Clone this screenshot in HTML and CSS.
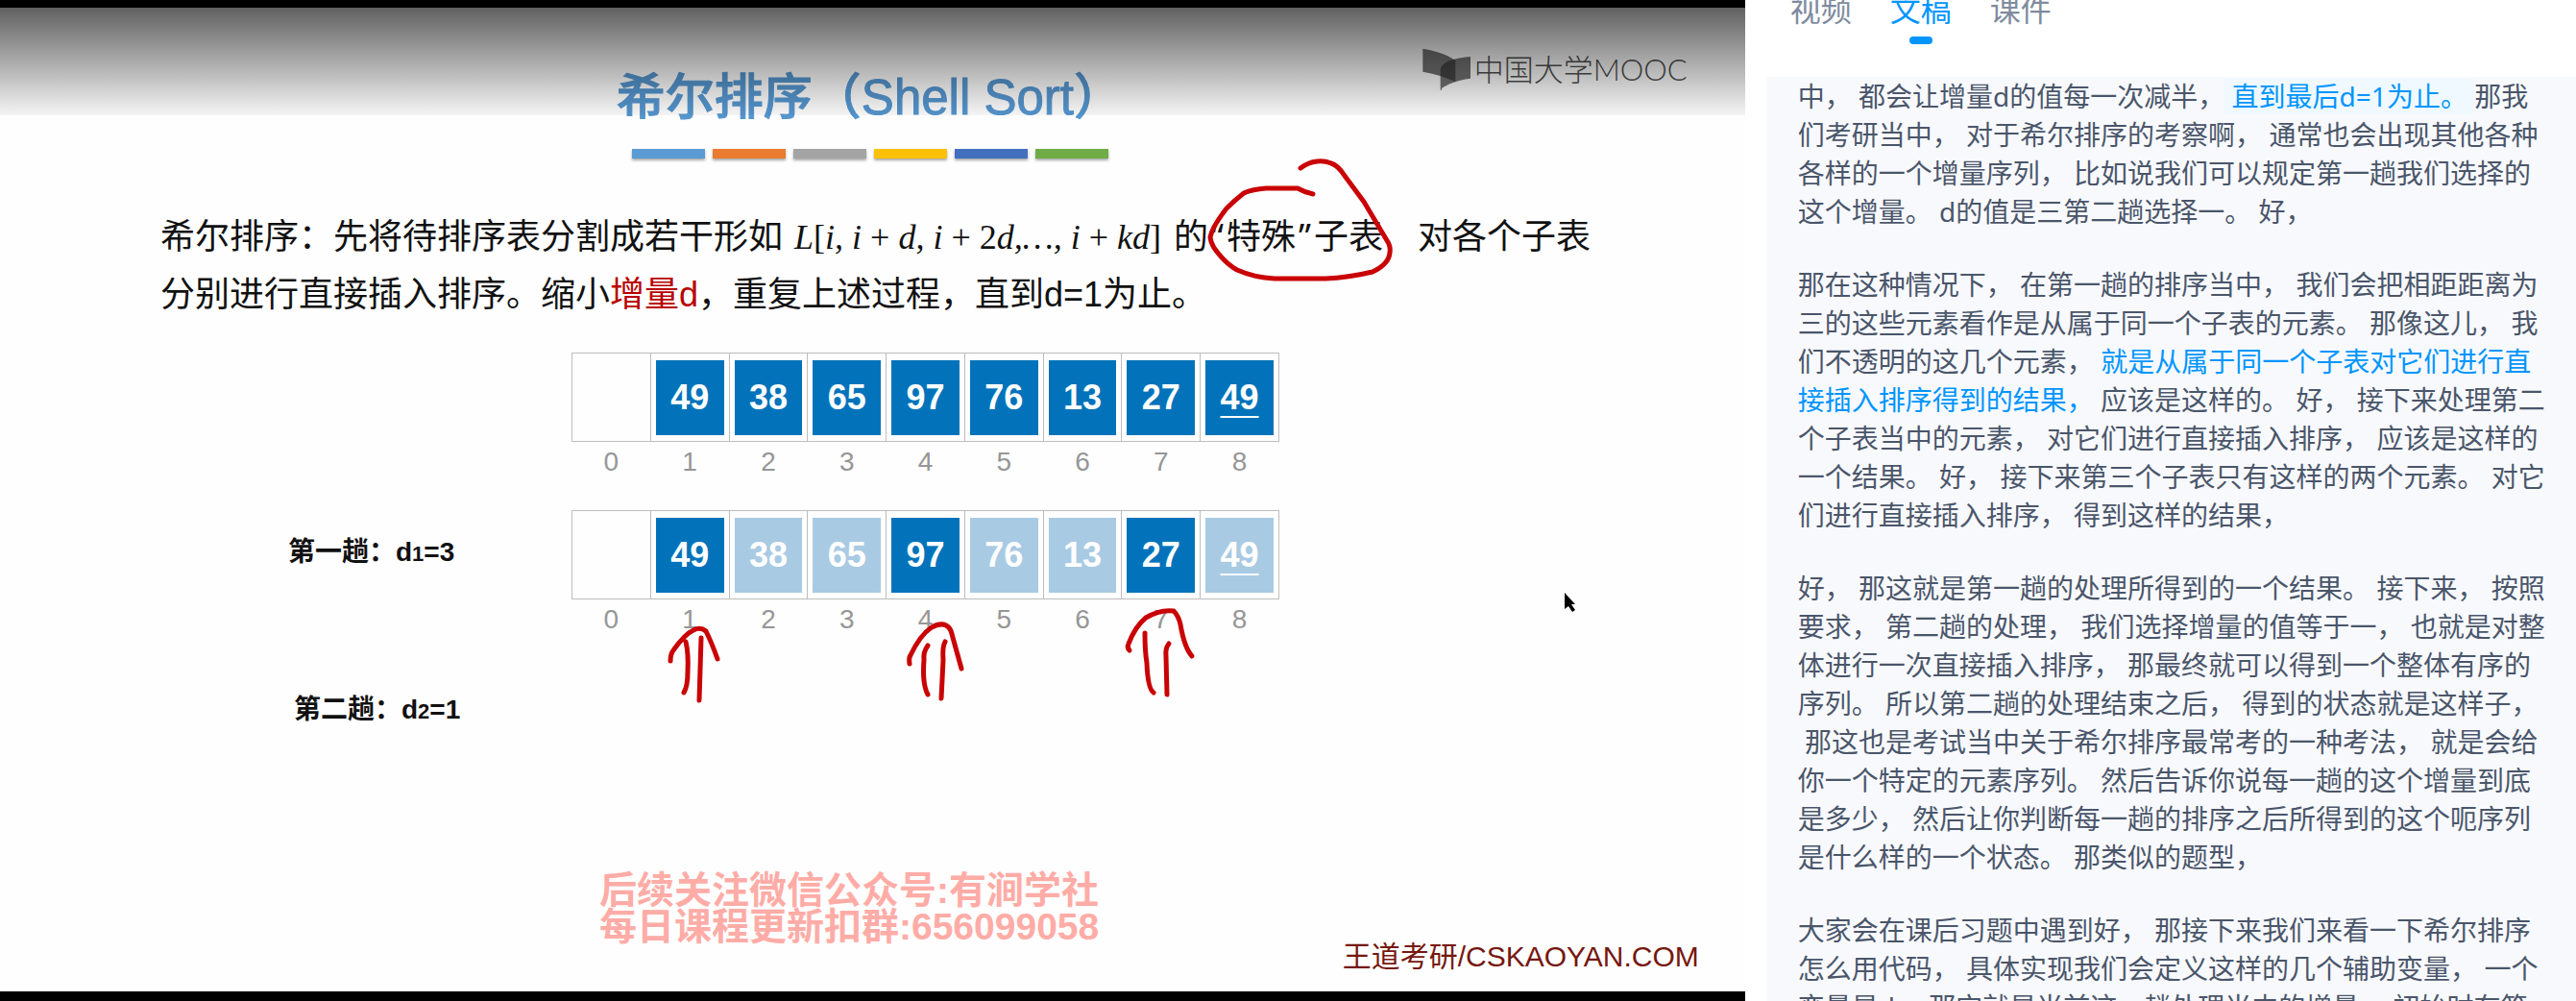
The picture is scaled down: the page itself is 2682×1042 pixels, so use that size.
FILE: index.html
```html
<!DOCTYPE html>
<html lang="zh-CN">
<head>
<meta charset="utf-8">
<title>希尔排序</title>
<link rel="stylesheet" href="styles.css">
</head>
<body>
<div class="layout">
  <main class="player">
    <article class="slide">
      <h1 class="title">希尔排序（Shell Sort）</h1>
      <div class="bars">
        <span class="bar sky"></span><span class="bar orange"></span><span class="bar gray"></span><span class="bar yellow"></span><span class="bar blue"></span><span class="bar green"></span>
      </div>
      <p class="definition">希尔排序：先将待排序表分割成若干形如<span class="math">L<b>[</b>i, i <b>+</b> d, i <b>+</b> <b>2</b>d,…, i <b>+</b> kd<b>]</b></span>的<span class="quote">“</span>特殊<span class="quote">”</span>子表　对各个子表<br>分别进行直接插入排序。缩小<em>增量d</em>，重复上述过程，直到d=1为止。</p>

      <section class="steps">
        <div class="step">
          <span class="step-name"></span>
          <table class="array">
            <tr><td></td><td><span>49</span></td><td><span>38</span></td><td><span>65</span></td><td><span>97</span></td><td><span>76</span></td><td><span>13</span></td><td><span>27</span></td><td><span><u>49</u></span></td></tr>
            <tr><th>0</th><th>1</th><th>2</th><th>3</th><th>4</th><th>5</th><th>6</th><th>7</th><th>8</th></tr>
          </table>
        </div>
        <div class="step">
          <span class="step-name">第一趟：d<small>1</small>=3</span>
          <table class="array">
            <tr><td></td><td><span>49</span></td><td class="faded"><span>38</span></td><td class="faded"><span>65</span></td><td><span>97</span></td><td class="faded"><span>76</span></td><td class="faded"><span>13</span></td><td><span>27</span></td><td class="faded"><span><u>49</u></span></td></tr>
            <tr><th>0</th><th>1</th><th>2</th><th>3</th><th>4</th><th>5</th><th>6</th><th>7</th><th>8</th></tr>
          </table>
        </div>
        <div class="step">
          <span class="step-name indented">第二趟：d<small>2</small>=1</span>
        </div>
      </section>

      <footer class="slide-footer">
        <p class="watermark">后续关注微信公众号:有涧学社<br>每日课程更新扣群:656099058</p>
        <p class="credit">王道考研/CSKAOYAN.COM</p>
      </footer>
    </article>

    <div class="brand">
      <svg width="50" height="44" viewBox="0 0 150 132" aria-hidden="true">
        <path d="M1 2C38 8 72 18 103 38V106C70 90 36 80 1 74Z" fill="#3c3c3c" fill-opacity=".72"/>
        <path d="M56 68C60 42 96 32 150 27V95C112 100 78 112 60 126V131H56Z" fill="#303030" fill-opacity=".68"/>
      </svg>
      <span>中国大学MOOC</span>
    </div>

    <div class="shade"></div>

    <svg class="ink" aria-hidden="true">
      <g fill="none" stroke="#c90305" stroke-width="5" stroke-linecap="round" stroke-linejoin="round">
        <path d="M1367 202Q1358 200 1351 196H1318Q1304 197 1295 201Q1286 208 1277 217Q1262 236 1260 247Q1261 255 1267 262Q1277 275 1288 281Q1306 289 1327 290H1380Q1404 289 1429 283Q1446 275 1447 263Q1448 257 1445 252L1420 210L1400 183Q1393 172 1386 170Q1379 167 1371 168Q1362 169 1354 175"/>
        <path d="M698 688Q698 681 701 677Q713 660 722 656Q729 652 735 657Q741 669 747 686M714 668Q717 680 716 700Q716 714 712 721M730 664L728 729"/>
        <path d="M947 691Q946 685 948 682Q958 661 970 653Q979 648 985 651Q990 654 991 660L1001 696M966 672Q961 679 962 687Q960 712 966 723M984 668Q981 673 982 687L980 727"/>
        <path d="M1176 677Q1173 674 1175 670Q1182 652 1193 643Q1208 634 1222 636Q1227 641 1229 650Q1233 674 1241 683M1192 659Q1192 678 1194 690Q1195 717 1201 721M1217 670Q1213 675 1214 683L1215 723"/>
      </g>
      <path d="M1629 617V634L1633 631L1637 637L1640 635L1636 629H1640Z" fill="#000"/>
    </svg>
  </main>

  <aside class="panel">
    <nav class="tabs">
      <button type="button" class="tab">视频</button>
      <button type="button" class="tab active">文稿</button>
      <button type="button" class="tab">课件</button>
    </nav>
    <div class="transcript">
      <p>中， 都会让增量d的值每一次减半，<mark> 直到最后d=1为止。 </mark>那我<br>们考研当中， 对于希尔排序的考察啊， 通常也会出现其他各种<br>各样的一个增量序列， 比如说我们可以规定第一趟我们选择的<br>这个增量。 d的值是三第二趟选择一。 好，</p>
      <p>那在这种情况下， 在第一趟的排序当中， 我们会把相距距离为<br>三的这些元素看作是从属于同一个子表的元素。 那像这儿， 我<br>们不透明的这几个元素， <a href="#">就是从属于同一个子表对它们进行直<br>接插入排序得到的结果，</a> 应该是这样的。 好， 接下来处理第二<br>个子表当中的元素， 对它们进行直接插入排序， 应该是这样的<br>一个结果。 好， 接下来第三个子表只有这样的两个元素。 对它<br>们进行直接插入排序， 得到这样的结果，</p>
      <p>好， 那这就是第一趟的处理所得到的一个结果。 接下来， 按照<br>要求， 第二趟的处理， 我们选择增量的值等于一， 也就是对整<br>体进行一次直接插入排序， 那最终就可以得到一个整体有序的<br>序列。 所以第二趟的处理结束之后， 得到的状态就是这样子，<br>&nbsp;那这也是考试当中关于希尔排序最常考的一种考法， 就是会给<br>你一个特定的元素序列。 然后告诉你说每一趟的这个增量到底<br>是多少， 然后让你判断每一趟的排序之后所得到的这个呃序列<br>是什么样的一个状态。 那类似的题型，</p>
      <p>大家会在课后习题中遇到好， 那接下来我们来看一下希尔排序<br>怎么用代码， 具体实现我们会定义这样的几个辅助变量， 一个<br>变量是d， 那它就是当前这一趟处理当中的增量， 初始时在第</p>
    </div>
  </aside>
</div>
</body>
</html>
```

FILE: styles.css
```css
* {
  box-sizing: border-box;
}

body {
  margin: 0;
  background: #fff;
  font-family: "Liberation Sans", "Noto Sans CJK SC", sans-serif;
}

h1, p {
  margin: 0;
}

.layout {
  display: grid;
  grid-template-columns: minmax(0, 21fr) minmax(0, 10fr);
  height: 100vh;
  overflow: hidden;
}

/* Video player */

.player {
  position: relative;
  display: flex;
  min-height: 0;
  padding: 8px 0 10px;
  background: #000;
}

.slide {
  flex: 1;
  display: flex;
  flex-direction: column;
  padding: 58px 48px 22px 167px;
  background: #fefefe;
  color: #111;
}

.title {
  margin-left: -125px;
  font-size: 51px;
  font-weight: 500;
  line-height: 72px;
  text-align: center;
  color: #5596cf;
  -webkit-text-stroke: 1px #5596cf;
}

.bars {
  display: flex;
  justify-content: center;
  gap: 8px;
  margin: 17px 0 52px -123px;
}

.bar {
  width: 76px;
  height: 10px;
  box-shadow: 0 2px 3px rgba(0, 0, 0, .35);
}

.sky { background: #5a9bd3; }
.orange { background: #ea7b30; }
.gray { background: #a4a4a4; }
.yellow { background: #fcc006; }
.blue { background: #4370be; }
.green { background: #6fac46; }

.definition {
  font-size: 36px;
  line-height: 60px;
  white-space: nowrap;
}

.definition em {
  font-style: normal;
  color: #b80000;
}

.math {
  margin: 0 13px 0 12px;
  font-family: "Liberation Serif", serif;
  font-style: italic;
  line-height: 1;
}

.math b {
  font-style: normal;
  font-weight: 400;
}

.quote {
  padding: 0 3px;
  font-family: "Noto Sans", sans-serif;
  line-height: 1;
}

.steps {
  margin: 30px 0 0 133px;
}

.step {
  display: grid;
  grid-template-columns: 295px 737px;
  height: 164px;
}

.step-name {
  padding-top: 24px;
  font-size: 28px;
  font-weight: 700;
  line-height: 40px;
}

.step-name small {
  font-size: 22px;
}

.indented {
  padding-left: 6px;
}

.array {
  width: 100%;
  height: 128px;
  border-collapse: collapse;
  table-layout: fixed;
}

.array td {
  height: 92px;
  padding: 6px 5px;
  border: 1px solid #bdbdbd;
}

.array td span {
  display: flex;
  align-items: center;
  justify-content: center;
  height: 78px;
  background: #0273bb;
  color: #fff;
  font-size: 36px;
  font-weight: 700;
}

.array td.faded span {
  background: #a9cae3;
}

.array u {
  text-decoration-thickness: 2px;
  text-underline-offset: 7px;
}

.array th {
  height: 42px;
  padding: 0;
  color: #969696;
  font-size: 28px;
  font-weight: 400;
}

.slide-footer {
  display: flex;
  align-items: flex-end;
  justify-content: space-between;
  margin-top: auto;
  padding-left: 457px;
}

.watermark {
  padding-bottom: 26px;
  color: #ffaca7;
  font-size: 39px;
  font-weight: 700;
  line-height: 38px;
}

.credit {
  color: #76170f;
  font-size: 30px;
  line-height: 28px;
}

.brand {
  position: absolute;
  top: 50px;
  right: 60px;
  display: flex;
  align-items: center;
  gap: 4px;
  color: #505050;
  font-family: Lato, "Noto Sans CJK SC", sans-serif;
  font-size: 31px;
  font-weight: 300;
  line-height: 44px;
}

.shade {
  position: absolute;
  top: 8px;
  left: 0;
  right: 0;
  height: 112px;
  background: linear-gradient(rgba(0, 0, 0, .62), rgba(0, 0, 0, .04));
  pointer-events: none;
}

.ink {
  position: absolute;
  top: 0;
  left: 0;
  width: 100%;
  height: 100%;
  pointer-events: none;
}

/* Transcript panel */

.panel {
  display: flex;
  flex-direction: column;
  min-height: 0;
  padding-left: 23px;
  font-family: "Noto Sans", "Noto Sans CJK SC", sans-serif;
}

.tabs {
  display: flex;
  flex: none;
  gap: 40px;
  height: 80px;
  padding-left: 24px;
}

.tab {
  display: flex;
  flex-direction: column;
  align-items: center;
  gap: 6px;
  height: 64px;
  margin-top: -12px;
  padding: 0;
  border: 0;
  background: none;
  color: #7f8b9e;
  font: inherit;
  font-size: 32px;
  line-height: 44px;
}

.tab.active {
  color: #0095ff;
}

.tab.active::after {
  content: "";
  width: 24px;
  height: 8px;
  border-radius: 4px;
  background: #0095ff;
}

.transcript {
  display: flex;
  flex: 1;
  flex-direction: column;
  gap: 36px;
  min-height: 0;
  padding-left: 32px;
  overflow: hidden;
  background: #f8f9fd;
  color: #4a566a;
  font-size: 28px;
  line-height: 40px;
  white-space: pre;
}

.transcript a,
.transcript mark {
  color: #0095ff;
  text-decoration: none;
}

.transcript mark {
  background: #f0f9ff;
}
```
